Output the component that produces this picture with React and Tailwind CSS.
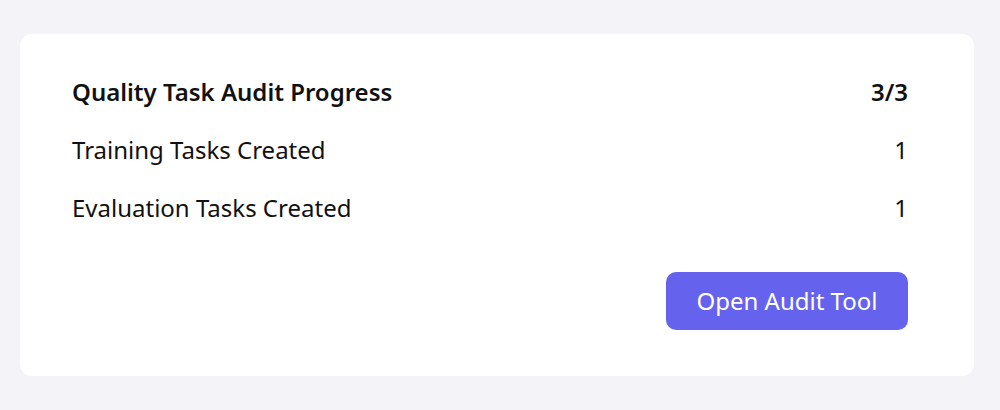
export default function App() {
  const rows = [
    { label: "Training Tasks Created", value: "1" },
    { label: "Evaluation Tasks Created", value: "1" },
  ];
  return (
    <div
      className="w-[1000px] h-[410px] bg-[#f4f4f8] pt-[34px] pl-[20px] pr-[26px]"
      style={{ fontFamily: '"Noto Sans", "Open Sans", sans-serif' }}
    >
      <div className="bg-white rounded-[12px] h-[342px] pl-[52px] pr-[66px] pt-[29px] pb-[46px] flex flex-col text-[#111111]">
        <div className="h-[58px] flex items-center justify-between text-[24px] font-semibold">
          <span>Quality Task Audit Progress</span>
          <span>3/3</span>
        </div>
        {rows.map((r) => (
          <div key={r.label} className="h-[58px] flex items-center justify-between text-[24px]">
            <span>{r.label}</span>
            <span>{r.value}</span>
          </div>
        ))}
        <div className="flex justify-end mt-[35px]">
          <button className="w-[242px] h-[58px] rounded-[10px] bg-[#6563ee] text-white text-[24px] flex items-center justify-center">
            Open Audit Tool
          </button>
        </div>
      </div>
    </div>
  );
}
